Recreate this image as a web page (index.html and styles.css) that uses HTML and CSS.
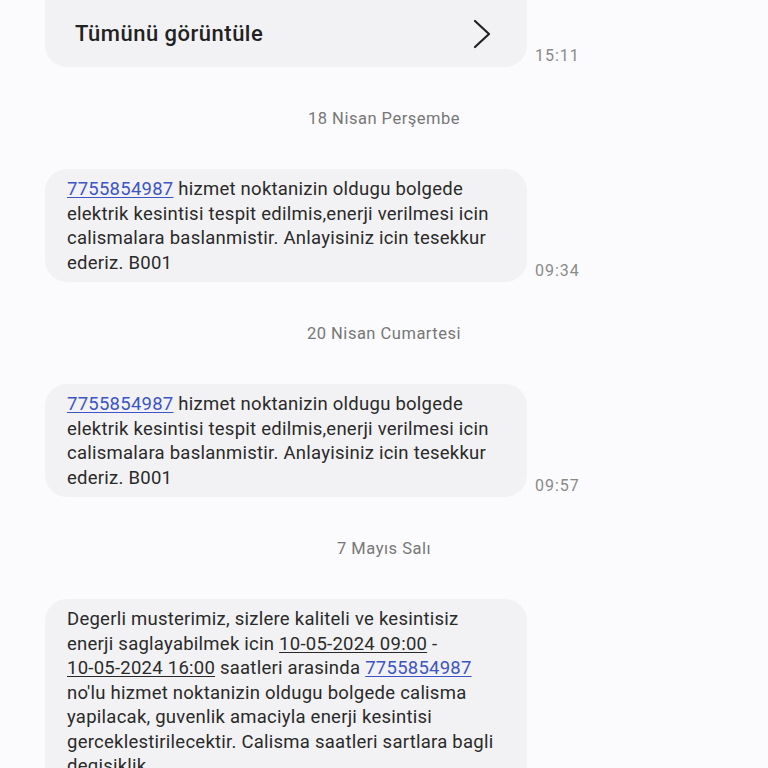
FILE: index.html
```html
<!DOCTYPE html>
<html lang="tr">
<head>
<meta charset="utf-8">
<link rel="stylesheet" href="styles.css">
</head>
<body>
<div class="thread">
  <div class="row">
    <div class="bubble bubble-view">
      <span class="view-all">Tümünü görüntüle</span>
      <svg class="chevron" width="20" height="30" viewBox="0 0 20 30"><polyline points="3,2 17,15 3,28" fill="none" stroke="#222" stroke-width="2.2" stroke-linecap="round" stroke-linejoin="round"/></svg>
    </div>
    <span class="time">15:11</span>
  </div>

  <div class="date">18 Nisan Perşembe</div>

  <div class="row">
    <div class="bubble msg"><a class="link">7755854987</a> hizmet noktanizin oldugu bolgede<br>elektrik kesintisi tespit edilmis,enerji verilmesi icin<br>calismalara baslanmistir. Anlayisiniz icin tesekkur<br>ederiz. B001</div>
    <span class="time">09:34</span>
  </div>

  <div class="date">20 Nisan Cumartesi</div>

  <div class="row">
    <div class="bubble msg"><a class="link">7755854987</a> hizmet noktanizin oldugu bolgede<br>elektrik kesintisi tespit edilmis,enerji verilmesi icin<br>calismalara baslanmistir. Anlayisiniz icin tesekkur<br>ederiz. B001</div>
    <span class="time">09:57</span>
  </div>

  <div class="date">7 Mayıs Salı</div>

  <div class="row">
    <div class="bubble msg">Degerli musterimiz, sizlere kaliteli ve kesintisiz<br>enerji saglayabilmek icin <span class="u">10-05-2024 09:00</span> -<br><span class="u">10-05-2024 16:00</span> saatleri arasinda <a class="link">7755854987</a><br>no'lu hizmet noktanizin oldugu bolgede calisma<br>yapilacak, guvenlik amaciyla enerji kesintisi<br>gerceklestirilecektir. Calisma saatleri sartlara bagli<br>degisiklik<br>gosterebilir. Anlayisiniz icin tesekkur ederiz.</div>
    <span class="time">10:12</span>
  </div>
</div>
</body>
</html>
```
FILE: styles.css
```css
html, body {
  margin: 0;
  padding: 0;
  background: #fbfbfd;
  overflow: hidden;
  height: 768px;
}
.thread {
  width: 768px;
  display: flex;
  flex-direction: column;
  font-family: Roboto, "Noto Sans", sans-serif;
  color: #222;
}
.row {
  display: flex;
  align-items: flex-end;
  gap: 8px;
  padding-left: 45px;
}
.bubble {
  width: 482px;
  box-sizing: border-box;
  background: #f2f2f4;
  border-radius: 22px;
}
.bubble-view {
  margin-top: -30px;
  height: 97px;
  padding: 30px 35px 0 30px;
  display: flex;
  align-items: center;
  justify-content: space-between;
}
.view-all {
  font-size: 22px;
  font-weight: 500;
  letter-spacing: 0.5px;
  color: #222;
}
.chevron {
  display: block;
}
.msg {
  padding: 8px 10px 7px 22px;
  font-size: 18.5px;
  letter-spacing: 0.25px;
  line-height: 24.5px;
  color: #2a2a2a;
  white-space: nowrap;
}
.link {
  color: #3d55c4;
  text-decoration: underline;
  text-underline-offset: 2px;
}
.u {
  text-decoration: underline;
  text-underline-offset: 2px;
}
.time {
  font-size: 16px;
  letter-spacing: 1px;
  line-height: 18px;
  color: #8a8a8a;
  margin-bottom: 2px;
}
.date {
  height: 102px;
  display: flex;
  align-items: center;
  justify-content: center;
  font-size: 16.5px;
  letter-spacing: 0.5px;
  color: #777;
}
```
